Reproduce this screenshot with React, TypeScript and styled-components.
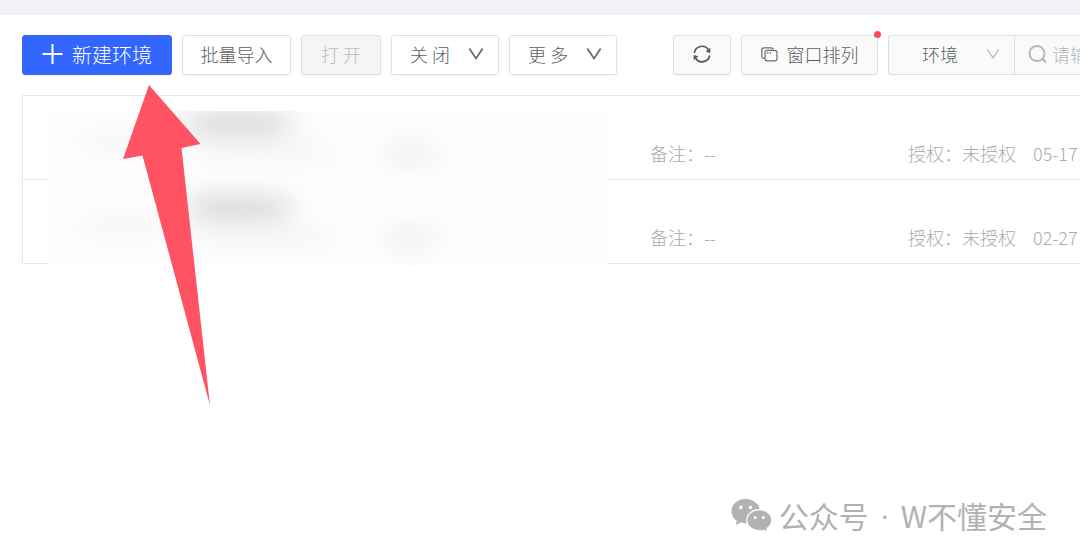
import React from "react";
import styled, { createGlobalStyle } from "styled-components";

const GlobalStyle = createGlobalStyle`
  *, *::before, *::after { box-sizing: border-box; }
  body {
    margin: 0;
    overflow-x: hidden;
    background: #fff;
    font-family: "Noto Sans CJK SC", sans-serif;
    font-size: 18px;
    font-weight: 300;
    color: #606266;
  }
  button, input, select { font: inherit; color: inherit; }
`;

const Page = styled.main`
  position: relative;
  min-height: 100vh;
  border-top: 15px solid #f0f2f6;
  padding: 20px 0 0 22px;
`;

const Toolbar = styled.div`
  display: flex;
  gap: 56px;
`;

const Group = styled.div<{ $grow?: boolean }>`
  display: flex;
  gap: 10px;
  flex: ${(p) => (p.$grow ? "1 1 0" : "0 0 auto")};
  min-width: 0;
`;

const Button = styled.button<{ $width: number; $kind?: "primary" | "soft" }>`
  position: relative;
  display: flex;
  flex: none;
  align-items: center;
  justify-content: center;
  gap: 9px;
  width: ${(p) => p.$width}px;
  height: 40px;
  padding: 0 0 2px;
  border: 1px solid ${(p) => (p.$kind === "primary" ? "#3366ff" : "#dcdee0")};
  border-radius: 3px;
  background: ${(p) =>
    p.$kind === "primary" ? "#3366ff" : p.$kind === "soft" ? "#fafafa" : "#fff"};
  color: ${(p) => (p.$kind === "primary" ? "#fff" : "#5c5e61")};
  font-size: ${(p) => (p.$kind === "primary" ? 20 : 18)}px;
  box-shadow: 0 1px 2px rgba(0, 0, 0, 0.04);
  white-space: nowrap;

  &:disabled {
    background: #f5f5f5;
    color: #b9bbbd;
  }
`;

const MenuButton = styled(Button)`
  justify-content: space-between;
  padding: 0 14px 2px 18px;
`;

const Dot = styled.span`
  position: absolute;
  top: -5px;
  right: -4px;
  width: 7px;
  height: 7px;
  border-radius: 50%;
  background: #ff4d4f;
`;

const SearchBar = styled.div`
  display: flex;
  flex: 1 1 0;
  min-width: 0;
  height: 40px;
  border: 1px solid #dcdee0;
  border-right: 0;
  border-radius: 3px 0 0 3px;
  background: #fafafa;
`;

const SelectBox = styled.label`
  display: flex;
  flex: none;
  align-items: center;
  width: 126px;
  padding: 0 14px 2px 0;
  border-right: 1px solid #dcdee0;
`;

const Select = styled.select`
  flex: 1;
  min-width: 0;
  height: 36px;
  padding: 0 0 0 33px;
  border: 0;
  background: transparent;
  appearance: none;
  outline: 0;
`;

const SearchBox = styled.label`
  display: flex;
  flex: 1 1 0;
  align-items: center;
  gap: 4px;
  min-width: 0;
  padding: 0 0 2px 13px;
  color: #b4b6b9;

  svg { flex: none; }
`;

const SearchInput = styled.input`
  flex: 1 1 0;
  min-width: 0;
  height: 36px;
  padding: 0;
  border: 0;
  outline: 0;
  background: transparent;

  &::placeholder { color: #b4b6b9; opacity: 1; }
`;

const List = styled.ul`
  position: relative;
  margin: 20px 0 0;
  padding: 0;
  border: 1px solid #e6e7e8;
  border-width: 1px 0 0 1px;
  list-style: none;
`;

const Row = styled.li`
  display: grid;
  grid-template-columns: minmax(0, 1fr) 258px 125px 47px;
  align-items: end;
  padding: 43px 0 12px;
  border-bottom: 1px solid #e6e7e8;
  color: #a9abae;
  line-height: 28px;
  white-space: nowrap;
`;

const Cell = styled.span`
  min-width: 0;
`;

const Redaction = styled.svg`
  position: absolute;
  top: 15px;
  left: 25px;
`;

const Pointer = styled.svg`
  position: absolute;
  top: 70px;
  left: 122px;
`;

const Watermark = styled.div`
  position: absolute;
  right: 33px;
  bottom: 25px;
  display: flex;
  align-items: center;
  color: #b2b2b2;
  font-size: 30px;
  font-weight: 400;
  line-height: 36px;
  white-space: nowrap;
`;

const Account = styled.span`
  margin-left: 7px;
`;

const Separator = styled.span`
  width: 32px;
  font-family: "Liberation Sans", sans-serif;
  text-align: center;
`;

const Chevron = ({ thin = false }: { thin?: boolean }) => (
  <svg width={thin ? 14 : 16} height={thin ? 12 : 14} viewBox="0 0 16 14" fill="none" aria-hidden="true">
    <path d="M1.300 1.500 8 11.500l6.700-10" stroke={thin ? "#b4b6b9" : "#66686b"} strokeWidth={thin ? 1.4 : 1.7} />
  </svg>
);

const PlusIcon = () => (
  <svg width="21" height="20" viewBox="0 0 21 20" fill="none" aria-hidden="true">
    <path d="M10.500 0v20M0.500 10h20" stroke="#fff" strokeWidth="2" />
  </svg>
);

const SyncIcon = () => (
  <svg width="18" height="18" viewBox="0 0 18 18" fill="none" aria-hidden="true">
    <path d="M1.300 8A7.700 7.700 0 0 1 15.500 5M16.700 10.500A7.700 7.700 0 0 1 2.500 13" stroke="#55575a" strokeWidth="1.700" />
    <path d="M17.400 2.800 17.200 8 12.700 6.700zM.6 15.200.8 10l4.500 1.300z" fill="#55575a" />
  </svg>
);

const SearchIcon = () => (
  <svg width="20" height="20" viewBox="0 0 20 20" fill="none" aria-hidden="true">
    <circle cx="9" cy="9.500" r="7.500" stroke="#b4b6b9" strokeWidth="1.900" />
    <path d="m14 14.500 4 4" stroke="#b4b6b9" strokeWidth="2.200" />
  </svg>
);

const WindowsIcon = () => (
  <svg width="17" height="15" viewBox="0 0 17 15" fill="none" stroke="#6b6d70" aria-hidden="true">
    <path d="M3.500 11.500H3A2.200 2.200 0 0 1 .8 9.300V3A2.200 2.200 0 0 1 3 .8h7.200A2.200 2.200 0 0 1 12.300 2.500" strokeWidth="1.200" />
    <rect x="4" y="3.300" width="12" height="10.500" rx="2.400" strokeWidth="1.200" />
    <path d="M6.800 5v2M9.300 5v2" strokeWidth="1" />
  </svg>
);

const WechatIcon = () => (
  <svg width="41" height="34" viewBox="0 0 41 34" aria-hidden="true">
    <path
      fill="#b2b2b2"
      d="M14.500 1C6.500 1 .5 6.300 .5 13.200c0 4 2 7.300 5.200 9.500L5 27l4.800-2.400c1.600.5 3.400.8 5.200.8C22.500 25.400 29 20 29 13.200 29 6.300 22.500 1 14.500 1z"
    />
    <path
      fill="#b2b2b2"
      stroke="#fff"
      strokeWidth="1.300"
      d="M28.400 11.600c-7 0-12.600 4.800-12.600 10.700S21.400 33 28.400 33c1.500 0 3-.2 4.300-.7l4.200 2-.9-3.800c3.100-2 4.900-4.900 4.900-8.200 0-5.900-5.500-10.700-12.500-10.700z"
    />
    <g fill="#fff">
      <circle cx="9.800" cy="9.500" r="1.800" />
      <circle cx="19.500" cy="9.500" r="1.800" />
      <circle cx="24.200" cy="19.500" r="1.500" />
      <circle cx="32.300" cy="19.500" r="1.500" />
    </g>
  </svg>
);

const records = [
  { note: "--", auth: "未授权", date: "05-17" },
  { note: "--", auth: "未授权", date: "02-27" },
];

export default function App() {
  return (
    <>
      <GlobalStyle />
      <Page>
        <Toolbar>
          <Group>
            <Button $width={150} $kind="primary"><PlusIcon />新建环境</Button>
            <Button $width={109}>批量导入</Button>
            <Button $width={80} disabled>打 开</Button>
            <MenuButton $width={108} aria-haspopup="menu">关 闭<Chevron /></MenuButton>
            <MenuButton $width={108} aria-haspopup="menu">更 多<Chevron /></MenuButton>
          </Group>
          <Group $grow>
            <Button $width={58} $kind="soft" aria-label="刷新"><SyncIcon /></Button>
            <Button $width={137} $kind="soft"><WindowsIcon />窗口排列<Dot /></Button>
            <SearchBar>
              <SelectBox>
                <Select aria-label="搜索类型" defaultValue="env">
                  <option value="env">环境</option>
                </Select>
                <Chevron thin />
              </SelectBox>
              <SearchBox>
                <SearchIcon />
                <SearchInput type="text" aria-label="搜索" placeholder="请输入" />
              </SearchBox>
            </SearchBar>
          </Group>
        </Toolbar>

        <List>
          {records.map((r) => (
            <Row key={r.date}>
              <Cell />
              <Cell>备注：{r.note}</Cell>
              <Cell>授权：{r.auth}</Cell>
              <Cell>{r.date}</Cell>
            </Row>
          ))}
          <Redaction width="560" height="155" viewBox="0 0 560 155" aria-hidden="true">
            <defs>
              <filter id="smear" x="-50%" y="-150%" width="200%" height="400%">
                <feGaussianBlur stdDeviation="17 13" />
              </filter>
            </defs>
            <rect width="560" height="155" fill="#fefefe" />
            <g filter="url(#smear)">
              {[0, 84].map((y) => (
                <g key={y}>
                  <rect x="140" y={y + 2} width="100" height="21" fill="#cfd2d2" />
                  <rect x="30" y={y + 16} width="90" height="30" fill="#f7f7f7" />
                  <rect x="150" y={y + 34} width="135" height="16" fill="#f2f2f2" />
                  <rect x="342" y={y + 30} width="42" height="26" fill="#ececec" />
                </g>
              ))}
            </g>
          </Redaction>
        </List>

        <Pointer width="90" height="322" viewBox="0 0 90 322" aria-hidden="true">
          <path d="M27 0 78.500 59 59.500 63 88 320.500 20.500 70.500 1 74z" fill="#ff5263" />
        </Pointer>

        <Watermark>
          <WechatIcon />
          <Account>公众号</Account>
          <Separator>·</Separator>
          <span>W不懂安全</span>
        </Watermark>
      </Page>
    </>
  );
}
